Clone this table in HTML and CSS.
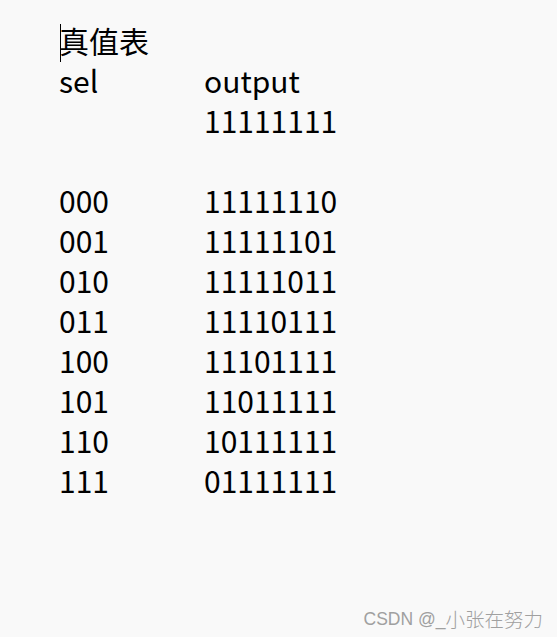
FILE: index.html
```html
<!DOCTYPE html>
<html lang="zh">
<head>
<meta charset="utf-8">
<link rel="stylesheet" href="styles.css">
</head>
<body>
<div class="page">
  <div class="title"><span class="caret"></span>真值表</div>
  <div class="table">
    <div>sel</div><div>output</div>
    <div></div><div>11111111</div>
    <div></div><div></div>
    <div>000</div><div>11111110</div>
    <div>001</div><div>11111101</div>
    <div>010</div><div>11111011</div>
    <div>011</div><div>11110111</div>
    <div>100</div><div>11101111</div>
    <div>101</div><div>11011111</div>
    <div>110</div><div>10111111</div>
    <div>111</div><div>01111111</div>
  </div>
  <div class="watermark"><span class="wm-latin">CSDN @_</span><span class="wm-cjk">小张在努力</span></div>
</div>
</body>
</html>
```
FILE: styles.css
```css
html, body {
  margin: 0;
  padding: 0;
  background: #f9f9f9;
}
.page {
  position: relative;
  width: 557px;
  height: 637px;
  box-sizing: border-box;
  padding: 20px 0 0 59px;
  font-family: "Noto Sans CJK SC", "Noto Sans", sans-serif;
  font-size: 30px;
  line-height: 40px;
  color: #000;
}
.title {
  position: relative;
  height: 40px;
}
.caret {
  position: absolute;
  left: 1px;
  top: 4px;
  width: 1px;
  height: 38px;
  background: #000;
}
.table {
  display: grid;
  grid-template-columns: 145px auto;
  grid-auto-rows: 40px;
}
.watermark {
  position: absolute;
  right: 14px;
  bottom: 8px;
  display: flex;
  align-items: center;
  height: 20px;
  color: #a0a0a0;
  white-space: pre;
}
.wm-latin {
  font-family: "Liberation Sans", Arial, sans-serif;
  font-size: 17.5px;
  line-height: 20px;
}
.wm-cjk {
  font-family: "Noto Sans CJK SC", sans-serif;
  font-size: 19.5px;
  line-height: 20px;
  font-weight: 300;
}
```
